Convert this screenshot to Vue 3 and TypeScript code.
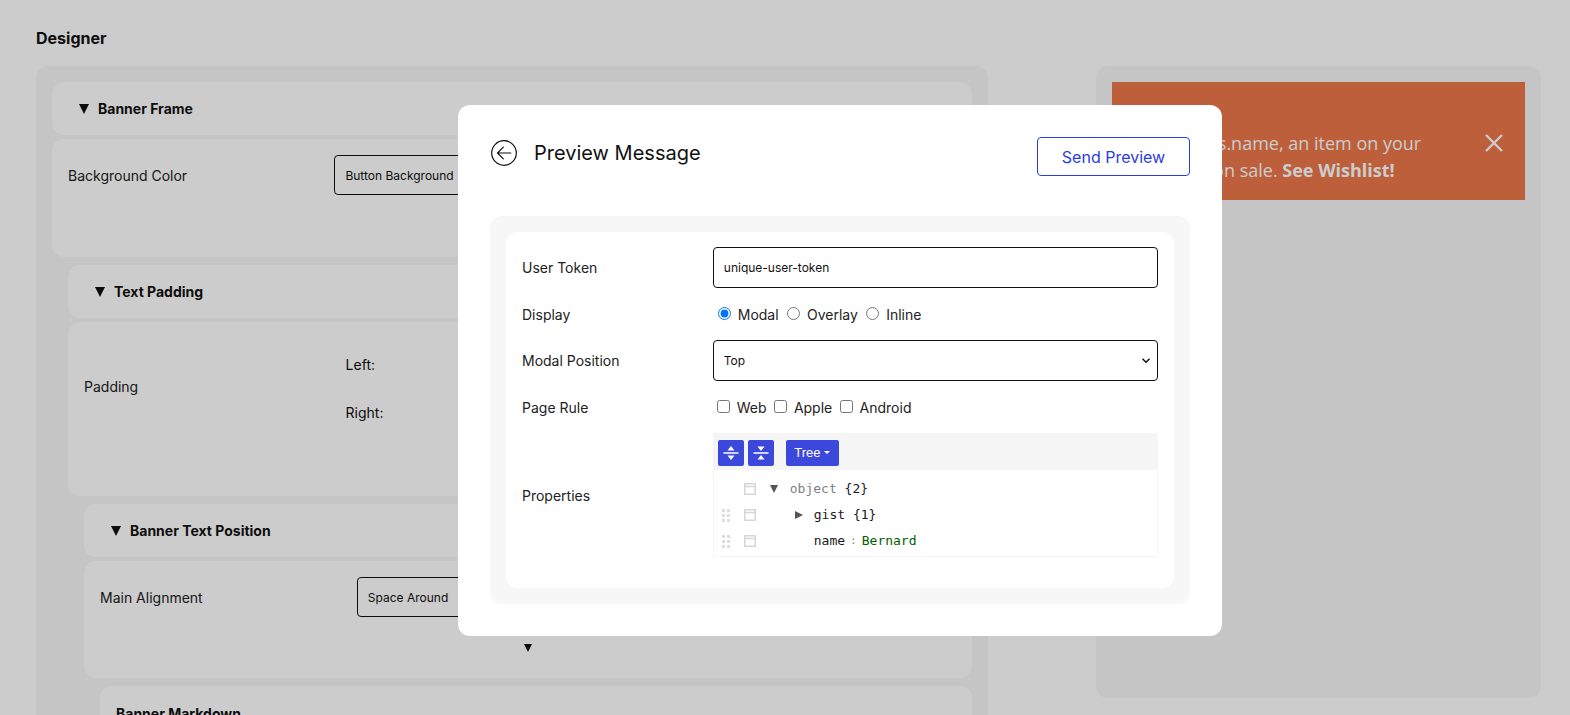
<script setup lang="ts">
const dots: number[] = [0, 1, 2]
</script>

<template>
  <div class="page">
    <h1 class="title">Designer</h1>
    <div class="columns">
      <main class="panel left">
        <section class="sec">
          <div class="head"><i class="tri"></i>Banner Frame</div>
          <div class="card h-118">
            <div class="row">
              <span class="lbl">Background Color</span>
              <div class="field">Button Background</div>
            </div>
          </div>
          <section class="sec">
            <div class="head"><i class="tri"></i>Text Padding</div>
            <div class="card h-174">
              <div class="row center">
                <span class="lbl">Padding</span>
                <div class="pads">
                  <div class="pad">Left:</div>
                  <div class="pad">Right:</div>
                </div>
              </div>
            </div>
            <section class="sec">
              <div class="head"><i class="tri"></i>Banner Text Position</div>
              <div class="card h-117">
                <div class="row">
                  <span class="lbl">Main Alignment</span>
                  <div class="field">Space Around</div>
                </div>
                <i class="tri small"></i>
              </div>
              <section class="sec">
                <div class="head plain">Banner Markdown</div>
              </section>
            </section>
          </section>
        </section>
      </main>
      <aside class="panel right">
        <div class="banner">
          <p class="banner-text">Hey properties.name, an item on your<br />wishlist is on sale. <b>See Wishlist!</b></p>
          <svg class="close" width="20" height="20" viewBox="0 0 20 20"><path d="M2 2 18 18M18 2 2 18" stroke="#fff" stroke-width="2.4" fill="none" /></svg>
        </div>
      </aside>
    </div>

    <div class="overlay">
      <div class="modal">
        <header class="modal-head">
          <svg class="back" width="26" height="26" viewBox="0 0 26 26" fill="none" stroke="#111" stroke-width="1.2">
            <circle cx="13" cy="13" r="12.300" />
            <path d="M19.800 13H6.500M12.300 7.200 6.500 13l5.800 5.800" stroke-linecap="round" stroke-linejoin="round" />
          </svg>
          <h2 class="modal-title">Preview Message</h2>
          <button class="send">Send Preview</button>
        </header>
        <div class="outer">
          <form class="form">
            <div class="frow r-token">
              <label class="flbl">User Token</label>
              <input class="inp" value="unique-user-token" />
            </div>
            <div class="frow r-choice">
              <span class="flbl">Display</span>
              <div class="choices">
                <input type="radio" name="d" checked /> <label>Modal</label>
                <input type="radio" name="d" /> <label>Overlay</label>
                <input type="radio" name="d" /> <label>Inline</label>
              </div>
            </div>
            <div class="frow r-select">
              <label class="flbl">Modal Position</label>
              <div class="sel-wrap">
                <select class="inp sel"><option>Top</option></select>
                <svg class="chev" width="8" height="5" viewBox="0 0 8 5" fill="none" stroke="#111" stroke-width="1.500"><path d="M.5.700 4 4.200 7.500.700" /></svg>
              </div>
            </div>
            <div class="frow r-choice">
              <span class="flbl">Page Rule</span>
              <div class="choices">
                <input type="checkbox" /> <label>Web</label>
                <input type="checkbox" /> <label>Apple</label>
                <input type="checkbox" /> <label>Android</label>
              </div>
            </div>
            <div class="frow r-json">
              <span class="flbl">Properties</span>
              <div class="json">
                <div class="menu">
                  <span class="jbtn">
                    <svg width="18" height="18" viewBox="0 0 18 18" fill="#fff"><path d="M1.500 8.200h15v1.600h-15zM9 2l3.500 4.500h-7zM9 16l-3.500-4.500h7z" /></svg>
                  </span>
                  <span class="jbtn">
                    <svg width="18" height="18" viewBox="0 0 18 18" fill="#fff"><path d="M1.500 8.200h15v1.600h-15zM9 7 5.500 2.500h7zM9 11l3.500 4.500h-7z" /></svg>
                  </span>
                  <span class="jbtn tree">Tree <i class="caret"></i></span>
                </div>
                <div class="jrow">
                  <span class="grip none"></span>
                  <svg class="ctx" width="12" height="12" viewBox="0 0 12 12" fill="none" stroke="#d6d6d6" stroke-width="1.500"><path d="M.75.750h10.500v10.500H.75zM.75 3.500h10.500" /></svg>
                  <i class="tog down"></i>
                  <span class="gray">object</span>&nbsp;<span>{2}</span>
                </div>
                <div class="jrow">
                  <span class="grip"><b v-for="d in dots" :key="d"></b><b v-for="d in dots" :key="'r' + d"></b></span>
                  <svg class="ctx" width="12" height="12" viewBox="0 0 12 12" fill="none" stroke="#d6d6d6" stroke-width="1.500"><path d="M.75.750h10.500v10.500H.75zM.75 3.500h10.500" /></svg>
                  <i class="tog rightward"></i>
                  <span>gist</span>&nbsp;<span>{1}</span>
                </div>
                <div class="jrow">
                  <span class="grip"><b v-for="d in dots" :key="d"></b><b v-for="d in dots" :key="'r' + d"></b></span>
                  <svg class="ctx" width="12" height="12" viewBox="0 0 12 12" fill="none" stroke="#d6d6d6" stroke-width="1.500"><path d="M.75.750h10.500v10.500H.75zM.75 3.500h10.500" /></svg>
                  <i class="tog blank"></i>
                  <span>name</span><span class="colon">:</span><span class="green">Bernard</span>
                </div>
              </div>
            </div>
          </form>
        </div>
      </div>
    </div>
  </div>
</template>

<style>
html, body { margin: 0; height: 100%; overflow: hidden; background: #fff; }
</style>

<style scoped>
.page { height: 715px; overflow: hidden; box-sizing: border-box; padding: 28px 29px 0 36px; font-family: Inter, "Liberation Sans", sans-serif; color: #111; }
.title { margin: 0 0 17px; font-size: 16px; line-height: 21px; font-weight: 700; }
.columns { display: grid; grid-template-columns: 952px 445px; column-gap: 108px; align-items: start; }
.panel { background: #f7f7f7; border-radius: 12px; padding: 16px; box-sizing: border-box; }
.left { min-height: 700px; }
.right { height: 632px; }
.sec { display: flex; flex-direction: column; }
.sec > .sec { margin-left: 16px; margin-top: 8px; }
.head { display: flex; align-items: center; gap: 9px; height: 53px; box-sizing: border-box; padding-left: 27px; margin-bottom: 4px; background: #fff; border-radius: 12px; font-size: 14px; font-weight: 700; }
.head.plain { padding-left: 16px; height: 55px; margin-bottom: 0; }
.tri { width: 0; height: 0; border-left: 5.5px solid transparent; border-right: 5.5px solid transparent; border-top: 10px solid #111; }
.tri.small { align-self: center; margin-top: 27px; border-left-width: 4.5px; border-right-width: 4.5px; border-top-width: 8px; }
.card { display: flex; flex-direction: column; box-sizing: border-box; background: #fff; border-radius: 12px; padding: 16px; font-size: 14px; }
.h-118 { height: 118px; }
.h-174 { height: 174px; }
.h-117 { height: 117px; }
.row { display: grid; grid-template-columns: 30% 1fr; align-items: center; }
.lbl { color: #222; }
.field { height: 40px; box-sizing: border-box; display: flex; align-items: center; padding-left: 10px; border: 1px solid #111; border-radius: 4px; font-size: 12px; background: #fff; }
.pads { display: flex; flex-direction: column; gap: 8px; padding: 6px 0 2px; }
.pad { height: 40px; display: flex; align-items: center; }
.banner { display: flex; align-items: center; height: 118px; box-sizing: border-box; padding-top: 32px; background: #eb7749; color: #fff; }
.banner-text { margin: 0 0 0 -10px; font-family: "Open Sans", sans-serif; font-size: 18px; line-height: 27px; white-space: nowrap; text-align: center; }
.close { margin-left: auto; margin-right: 21px; margin-top: -28px; }
.overlay { position: fixed; inset: 0; background: rgba(0, 0, 0, 0.2); }
.modal { position: absolute; left: 458px; top: 105px; width: 764px; height: 531px; box-sizing: border-box; padding: 32px; background: #fff; border-radius: 12px; display: flex; flex-direction: column; font-family: Inter, "Liberation Sans", sans-serif; }
.modal-head { display: flex; align-items: center; height: 39px; margin-bottom: 40px; }
.back { margin: -7px 0 0 1px; }
.modal-title { margin: -8px 0 0 17px; font-size: 20px; line-height: 28px; font-weight: 400; }
.send { margin-left: auto; width: 153px; height: 39px; box-sizing: border-box; border: 1px solid #2b3de0; border-radius: 4px; background: #fff; color: #2b3de0; font: 400 16px Inter, sans-serif; }
.outer { flex: 1; background: #f7f7f7; border-radius: 12px; padding: 16px; }
.form { height: 100%; box-sizing: border-box; background: #fff; border-radius: 12px; padding: 15px 16px; }
.frow { display: grid; grid-template-columns: 30% 1fr; align-items: center; font-size: 14px; color: #222; }
.r-token, .r-select { height: 41px; }
.r-choice { height: 52px; }
.inp { display: block; height: 41px; width: 100%; box-sizing: border-box; padding: 0 10px; border: 1px solid #111; border-radius: 4px; background-color: #fff; font: 400 12px Inter, sans-serif; color: #111; outline: 0; }
.sel { appearance: none; }
.sel-wrap { position: relative; }
.chev { position: absolute; right: 8px; top: 18px; }
.choices { line-height: 20px; }
.choices label { margin-right: 3.4px; }
.json { border: 1px solid #f5f5f5; box-sizing: border-box; height: 124px; font: 13px/26px "DejaVu Sans Mono", monospace; color: #1a1a1a; }
.menu { display: flex; align-items: center; gap: 4px; height: 36px; box-sizing: border-box; padding: 1px 0 0 4px; background: #f5f5f5; }
.jbtn { display: flex; align-items: center; justify-content: center; width: 26px; height: 26px; border-radius: 2px; background: #3c48dc; color: #fff; }
.tree { width: 53px; margin-left: 8px; font: 13px "Liberation Sans", Arial, sans-serif; gap: 4px; }
.caret { width: 0; height: 0; border-left: 3.5px solid transparent; border-right: 3.5px solid transparent; border-top: 3.500px solid #fff; }
.jrow { display: flex; align-items: center; height: 26px; padding-left: 8px; white-space: nowrap; }
.jrow:nth-child(2) { margin-top: 6px; }
.grip { width: 8px; display: grid; grid-template-columns: 3px 3px; gap: 2px; margin-right: 14px; }
.grip b { width: 3px; height: 3px; background: #ddd; }
.ctx { margin-right: 13px; flex: none; }
.tog { flex: none; width: 0; height: 0; margin-right: 12px; }
.tog.down { margin-left: 1px; border-left: 4.500px solid transparent; border-right: 4.500px solid transparent; border-top: 8px solid #555; }
.tog.rightward { margin-left: 26px; margin-right: 11px; border-top: 4.500px solid transparent; border-bottom: 4.500px solid transparent; border-left: 8px solid #555; }
.tog.blank { width: 9px; margin-left: 25px; margin-right: 11px; }
.gray { color: #808080; }
.colon { margin: 0 5px; color: #808080; font-size: 11px; }
.green { color: #006000; }
</style>
